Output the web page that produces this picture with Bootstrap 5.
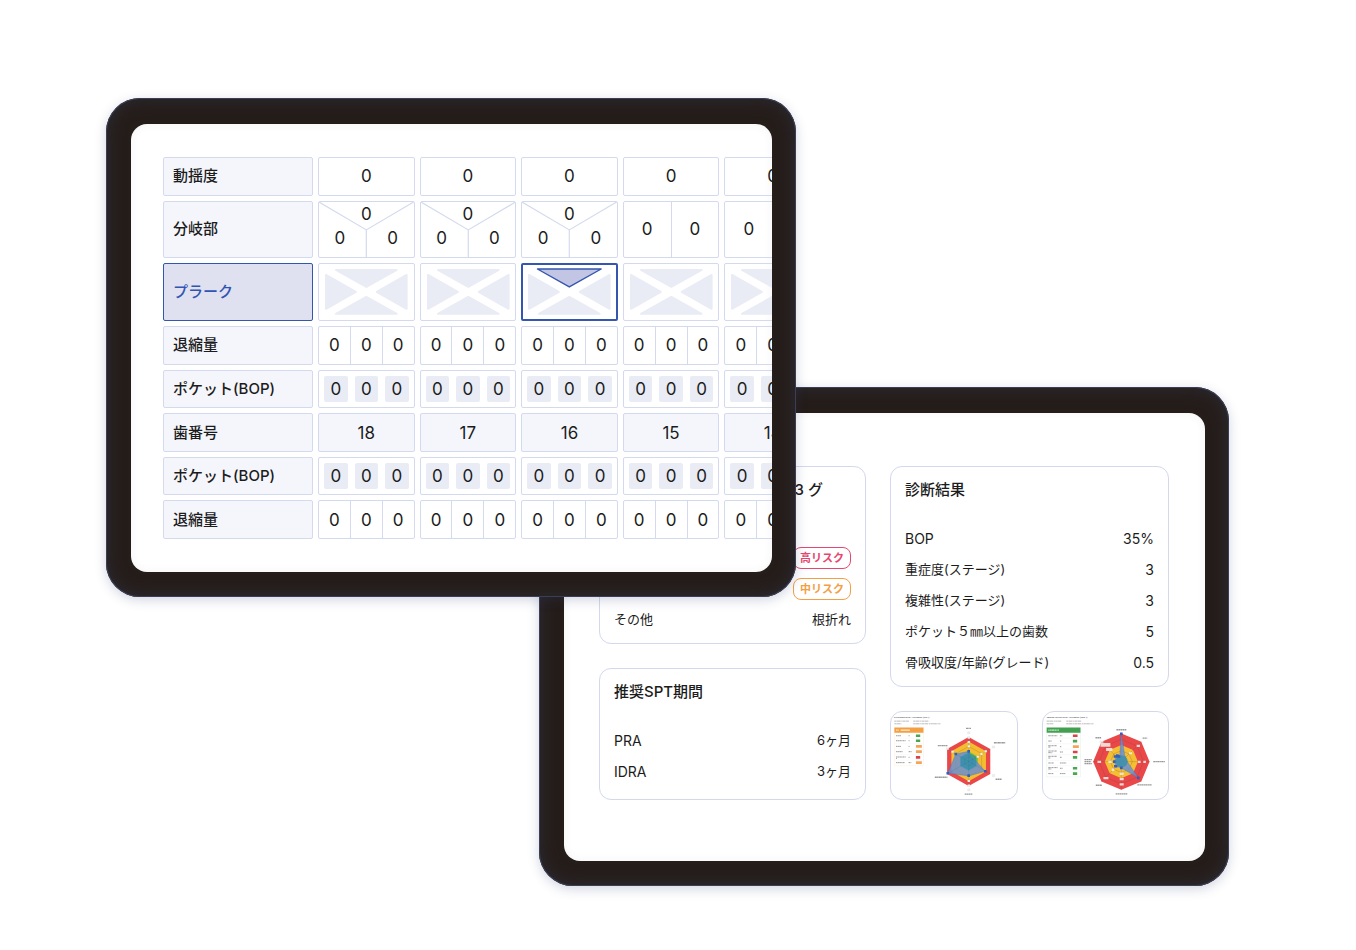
<!DOCTYPE html>
<html lang="ja">
<head>
<meta charset="utf-8">
<meta name="viewport" content="width=device-width, initial-scale=1">
<title>歯周検査</title>
<link href="https://cdn.jsdelivr.net/npm/bootstrap@5.3.0/dist/css/bootstrap.min.css" rel="stylesheet">
<style>
body{font-family:Inter,"Noto Sans CJK JP",sans-serif;color:#1c1c1c;background:#fff}
.stage{padding:98px 127px 64px 106px}
.tablet{width:690px;max-width:100%;padding:26px 24px 25px 25px;border-radius:34px;background:#251d1a;
  box-shadow:inset 0 0 0 1px #3a3f55,inset 0 0 18px #2d2c36,0 3px 12px rgba(50,65,120,.22)}
.tablet-front{z-index:2}
.tablet-back{margin-top:-210px}
.screen{background:#fff;border-radius:16px;min-height:448px;box-shadow:inset 0 0 10px rgba(60,70,110,.06)}
.screen-chart{padding:28px 0 28px 27px}
.screen-report{padding:53px 36px 61px 35px}

.perio{width:668px;height:392px;table-layout:fixed;border-collapse:separate;border-spacing:5px;font-size:17px;line-height:24px}
.perio col:first-child{width:150px}
.perio th,.perio td{height:38px;padding:0;border:1px solid #d3daee;border-radius:2px}
.perio .tall th,.perio .tall td{height:57px}
.perio th{background:#f5f6fc;font-weight:500;font-size:15px;padding-left:9px}
.perio td{position:relative;text-align:center}
.perio td.three-way{vertical-align:top}
.perio .number td{background:#f5f6fc}
.perio .picked th{background:#dfe0f0;border-color:#3556ae;color:#3154b0}
.perio .picked td.on{border:2px solid #3556ae}
.split{height:100%}
.split span{flex:1 1 0;display:flex;align-items:center;justify-content:center}
.split span+span{border-left:1px solid #d3daee}
.chips{height:100%;padding:5px;gap:7px}
.chips span{flex:1 1 0;display:flex;align-items:center;justify-content:center;background:#e9ecf5;border-radius:2px}
.lines{position:absolute;inset:0;width:100%;height:100%}
.lines path{fill:none;stroke:#d3daee;stroke-width:1.2}
.furca{position:relative;gap:42px}
.lines .faces path{fill:#e9ecf5;stroke:#e9ecf5;stroke-width:2;stroke-linejoin:round}
.lines .faces path.hit{fill:#c3c5e5;stroke:#3556ae;stroke-width:1.4}

.report{display:grid;grid-template-columns:267fr 279fr;gap:24px}
.panel{border:1px solid #d3d8ec;border-radius:12px;padding:13px 14px 8px}
.panel.roomy{padding-bottom:12px}
.panel h2{font-size:15px;line-height:20px;font-weight:500;margin:0 0 23px}
.panel dl{margin:0;font-size:13px}
.panel dl>div{height:31px}
.panel dt{font-weight:400}
.panel dd{margin:0}
.panel .latin{font-size:14px}
.panel.first h2{margin-bottom:42px;padding-right:28px}
.risk{font-size:11px;line-height:20px;font-weight:700;border:1px solid;border-radius:8px;padding:0 5px;width:58px;white-space:nowrap}
.risk-high{color:#e6476f}
.risk-mid{color:#f3a045}
.thumb{border:1px solid #d3d8ec;border-radius:12px;overflow:hidden;height:89px}
.thumb svg{display:block;width:100%;height:100%}
</style>
</head>
<body>
<main class="stage d-flex flex-column">
  <section class="tablet tablet-front position-relative">
    <div class="screen screen-chart overflow-hidden">
      <table class="perio">
        <colgroup><col><col><col><col><col><col></colgroup>
        <tbody id="perio"></tbody>
      </table>
    </div>
  </section>

  <section class="tablet tablet-back align-self-end">
    <div class="screen screen-report">
      <div class="report">
        <div class="d-flex flex-column gap-4">
          <article class="panel first">
            <h2 class="text-end">3 グ</h2>
            <dl>
              <div class="d-flex align-items-center justify-content-end"><dd class="risk risk-high text-center">高リスク</dd></div>
              <div class="d-flex align-items-center justify-content-end"><dd class="risk risk-mid text-center">中リスク</dd></div>
              <div class="d-flex align-items-center justify-content-between"><dt>その他</dt><dd>根折れ</dd></div>
            </dl>
          </article>
          <article class="panel roomy">
            <h2>推奨SPT期間</h2>
            <dl>
              <div class="d-flex align-items-center justify-content-between"><dt class="latin">PRA</dt><dd>6ヶ月</dd></div>
              <div class="d-flex align-items-center justify-content-between"><dt class="latin">IDRA</dt><dd>3ヶ月</dd></div>
            </dl>
          </article>
        </div>
        <div class="d-flex flex-column gap-4">
          <article class="panel">
            <h2>診断結果</h2>
            <dl>
              <div class="d-flex align-items-center justify-content-between"><dt class="latin">BOP</dt><dd class="latin">35%</dd></div>
              <div class="d-flex align-items-center justify-content-between"><dt>重症度(ステージ)</dt><dd class="latin">3</dd></div>
              <div class="d-flex align-items-center justify-content-between"><dt>複雑性(ステージ)</dt><dd class="latin">3</dd></div>
              <div class="d-flex align-items-center justify-content-between"><dt>ポケット５㎜以上の歯数</dt><dd class="latin">5</dd></div>
              <div class="d-flex align-items-center justify-content-between"><dt>骨吸収度/年齢(グレード)</dt><dd class="latin">0.5</dd></div>
            </dl>
          </article>
          <div class="d-flex gap-4">
            <figure class="thumb flex-fill m-0">
              <svg viewBox="18 20 378 261" role="img" aria-label="PRA">
                <text x="27" y="38" font-family="Liberation Serif,serif" font-size="7" font-weight="700" fill="#555">Periodontal Risk Assessment (PRA)</text>
                <g stroke="#bbb" stroke-width="3" stroke-dasharray="7 1 11 2 4 1">
                  <path d="M28 47h44M85 47h48M28 55h22M85 55h82"/>
                </g>
                <path fill="#fff" stroke="#fbe6cc" d="M28 82h88v99H28z"/>
                <path fill="#f3a045" d="M28 66h88v16H28z"/>
                <path stroke="#fff" stroke-width="4" stroke-dasharray="4 1 3 6 24 0" d="M33 74h42" opacity=".8"/>
                <path stroke="#f2f2f2" d="M28 98h88M28 115h88M28 131h88M28 148h88M28 165h88"/>
                <g stroke="#999" stroke-width="3" stroke-dasharray="5 1 3 1">
                  <path d="M33 91h16M33 106h29M33 123h15M33 139h21M33 155h29M33 159h3M33 172h27M71 91h3M71 106h3M71 123h3M71 139h9M71 156h3M71 172h8"/>
                </g>
                <g stroke-width="8">
                  <path stroke="#4aa653" d="M93 91h13M93 106h13"/><path stroke="#f3a65a" d="M93 123h18M93 139h18M93 172h18"/><path stroke="#d9444a" d="M93 156h13"/>
                </g>
                <path fill="#e94748" d="M252 95l65 36v75l-65 36-65-36v-75z"/>
                <path fill="#f4bd2f" d="M252 108l52 30v61l-52 29-52-29v-61z"/>
                <path fill="#79bf3d" d="M252 138l24 14 4 8-2 24-26 14-26-14v-30z"/>
                <path fill="none" stroke="#9b7f38" d="M252 123l39 22v46l-39 22-39-22v-46zM252 146l20 11v23l-20 12-20-12v-23z"/>
                <path fill="#6a8fd0" fill-opacity=".85" stroke="#3e70c7" d="M252 138l6 18 16 11 28 31-50 14-63-8 24-58z"/>
                <path fill="#2d8fa8" fill-opacity=".7" d="M252 142l23 12v27l-23 14-25-14v-26z"/>
                <path fill="none" stroke="#2b6d86" stroke-opacity=".5" d="M252 95v147M187 131l130 75M317 131l-130 75M252 154l12 7v14l-12 7-12-7v-14z"/>
                <path fill="#315fbe" d="M248 134h8v8h-8zM209 142h8v8h-8zM298 194h8v8h-8zM248 207h8v8h-8zM185 200h8v8h-8z"/>
                <path fill="#f3f3f3" stroke="#bbb" stroke-width=".6" d="M249 79h7v6h-7zM249 94h7v6h-7zM249 107h7v6h-7zM249 120h7v6h-7zM323 122h7v6h-7zM300 135h7v6h-7zM287 143h7v6h-7zM276 151h7v6h-7zM185 127h7v6h-7zM200 136h7v6h-7zM323 208h7v6h-7zM249 224h7v6h-7zM249 238h7v6h-7zM249 251h7v6h-7z"/>
                <g stroke="#999" stroke-width="4" stroke-dasharray="6 1 4 1">
                  <path d="M244 69h15M328 112h34M159 121h29M150 216h38M333 222h18M240 267h24"/>
                </g>
              </svg>
            </figure>
            <figure class="thumb flex-fill m-0">
              <svg viewBox="18 20 378 261" role="img" aria-label="IDRA">
                <text x="29" y="38" font-family="Liberation Serif,serif" font-size="7" font-weight="700" fill="#555">Implant Disease Risk Assessment (IDRA)</text>
                <g stroke="#bbb" stroke-width="3" stroke-dasharray="7 1 11 2 4 1">
                  <path d="M29 47h44M88 47h46M29 55h22M88 55h82"/>
                </g>
                <path fill="#fff" stroke="#d5ead8" d="M29 82h102v133H29z"/>
                <path fill="#43a050" d="M29 66h102v16H29z"/>
                <path stroke="#fff" stroke-width="4" stroke-dasharray="4 1 3 1 10 1" d="M34 74h32" opacity=".7"/>
                <path stroke="#eee" d="M29 98h102M29 115h102M29 131h102M29 148h102M29 165h102M29 181h102M29 197h102"/>
                <g stroke="#999" stroke-width="3" stroke-dasharray="5 1 3 1">
                  <path d="M34 91h27M34 107h11M34 121h25M34 125h7M34 137h26M34 142h12M34 153h26M34 158h7M34 173h17M34 187h28M34 191h10M34 205h16M69 91h7M69 107h4M69 124h4M69 140h10M69 156h6M69 173h20M69 189h8M69 205h17"/>
                </g>
                <g stroke-width="8">
                  <path stroke="#d9444a" d="M108 91h14M108 140h14"/><path stroke="#4aa653" d="M108 107h13M108 156h13M108 189h13M108 205h13"/><path stroke="#f3a65a" d="M108 124h18"/>
                </g>
                <path fill="#e94748" d="M254 84l60 25 25 60-25 60-60 25-60-25-25-60 25-60z"/>
                <path fill="#f4c033" d="M254 119l35 15 15 35-15 35-35 15-35-15-15-35 15-35z"/>
                <path fill="none" stroke="#7d4a36" stroke-opacity=".75" d="M254 102l47 20 20 47-20 47-47 20-47-20-20-47 20-47zM254 136l23 10 10 23-10 23-23 10-23-10-10-23 10-23z"/>
                <path stroke="#7d4a36" stroke-opacity=".7" d="M254 84v170M169 169h170M194 109l120 120M314 109L194 229"/>
                <path fill="#6a8fd0" fill-opacity=".85" stroke="#3e70c7" d="M254 85l10 64 8 20 33 49-51-30-16-5-5-14 5-15 11-4z"/>
                <circle cx="255" cy="168" r="18" fill="#2d8fa8" fill-opacity=".7"/>
                <path fill="#315fbe" d="M250 81h8v8h-8zM301 214h8v8h-8zM250 184h8v8h-8zM232 179h10v8h-10zM229 165h8v8h-8zM231 150h20v7h-20zM238 147h8v9h-8z"/>
                <path fill="#f0e8e6" fill-opacity=".9" d="M191 113h30v11h-30zM208 128h19v9h-19zM300 118h10v7h-10zM277 141h9v6h-9zM182 166h11v7h-11zM215 166h10v7h-10zM304 166h8v7h-8zM320 166h8v7h-8zM200 215h15v7h-15zM225 190h8v7h-8zM249 202h12v7h-12zM249 218h12v7h-12zM249 234h12v7h-12zM188 105h12v7h-12z"/>
                <g stroke="#999" stroke-width="4" stroke-dasharray="6 1 4 1">
                  <path d="M239 73h31M318 98h14M176 97h17M143 163h22M143 169h20M143 175h22M350 169h36M177 240h19M302 239h44M237 266h36"/>
                </g>
              </svg>
            </figure>
          </div>
        </div>
      </div>
    </div>
  </section>
</main>
<script>
const row = (label, cells, cls = '') =>
  `<tr class="${cls}"><th scope="row">${label}</th>${cells.join('')}</tr>`;
const five = cell => Array(5).fill(cell);
const three = '<span>0</span>'.repeat(3);
const split = `<td><div class="split d-flex">${three}</div></td>`;
const chips = `<td><div class="chips d-flex">${three}</div></td>`;
const furca3 = `<td class="three-way"><svg class="lines" viewBox="0 0 95 56" preserveAspectRatio="none" aria-hidden="true"><path d="M0 0L47.5 28L95 0M47.5 28V56"/></svg>
  <div class="position-relative">0</div><div class="furca d-flex justify-content-center"><span>0</span><span>0</span></div></td>`;
const furca2 = '<td><div class="split d-flex"><span>0</span><span>0</span></div></td>';
const faces = on => `<td class="${on ? 'on' : ''}"><svg class="lines" viewBox="${on ? '1 1 93 54' : '0 0 95 56'}" preserveAspectRatio="none" aria-hidden="true"><g class="faces">
  <path d="M7 11V45L37 28Z"/><path d="M88 11V45L58 28Z"/><path d="M17 50H78L47.5 33Z"/>
  <path class="${on ? 'hit' : ''}" d="${on ? 'M15.5 5H79.5L47.5 23Z' : 'M17 6H78L47.5 23Z'}"/></g></svg></td>`;
document.getElementById('perio').innerHTML =
  row('動揺度', five('<td>0</td>')) +
  row('分岐部', [furca3, furca3, furca3, furca2, furca2], 'tall') +
  row('プラーク', [0, 0, 1, 0, 0].map(faces), 'tall picked') +
  row('退縮量', five(split)) +
  row('ポケット(BOP)', five(chips)) +
  row('歯番号', [18, 17, 16, 15, 14].map(n => `<td>${n}</td>`), 'number') +
  row('ポケット(BOP)', five(chips)) +
  row('退縮量', five(split));
</script>
<script src="https://cdn.jsdelivr.net/npm/bootstrap@5.3.0/dist/js/bootstrap.bundle.min.js"></script>
</body>
</html>
